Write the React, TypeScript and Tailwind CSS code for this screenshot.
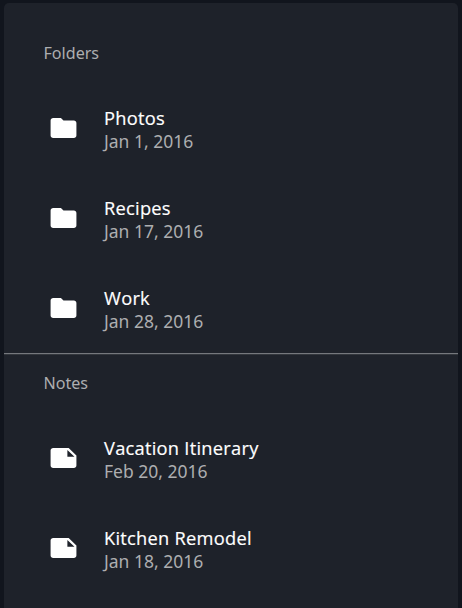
type Entry = { name: string; date: string };

const folders: Entry[] = [
  { name: "Photos", date: "Jan 1, 2016" },
  { name: "Recipes", date: "Jan 17, 2016" },
  { name: "Work", date: "Jan 28, 2016" },
];

const notes: Entry[] = [
  { name: "Vacation Itinerary", date: "Feb 20, 2016" },
  { name: "Kitchen Remodel", date: "Jan 18, 2016" },
];

const FOLDER = "M10 4H4c-1.1 0-1.99.9-1.99 2L2 18c0 1.1.9 2 2 2h16c1.1 0 2-.9 2-2V8c0-1.1-.9-2-2-2h-8l-2-2z";
const NOTE = "M22 10l-6-6H4c-1.1 0-2 .9-2 2v12.01c0 1.1.9 1.99 2 1.99l16-.01c1.1 0 2-.89 2-1.99v-8zm-7-4.5l5.5 5.5H15V5.5z";

function Row({ entry, icon }: { entry: Entry; icon: string }) {
  return (
    <li className="flex h-[90px] items-center pl-[44px]">
      <svg viewBox="0 0 24 24" className="h-[30px] w-[31px] shrink-0 fill-white" preserveAspectRatio="none">
        <path d={icon} />
      </svg>
      <div className="ml-[25px] pt-[2px] text-[17.5px] leading-[23px]">
        <h4 className="mb-px font-['Open_Sans','Noto_Sans',sans-serif] text-[18.3px] tracking-[0.25px] text-white [-webkit-text-stroke:0.18px_white]">{entry.name}</h4>
        <p className="text-[#adaeb0]">{entry.date}</p>
      </div>
    </li>
  );
}

function Section({ title, entries, icon }: { title: string; entries: Entry[]; icon: string }) {
  return (
    <section>
      <h3 className="flex h-[60px] items-center pl-[39.5px] text-[16.1px] text-[#adaeb0]">{title}</h3>
      <ul>
        {entries.map((entry) => (
          <Row key={entry.name} entry={entry} icon={icon} />
        ))}
      </ul>
    </section>
  );
}

export default function App() {
  return (
    <main className="h-[608px] overflow-hidden bg-[#11151d] px-1 pt-[3px] font-['Noto_Sans',sans-serif]">
      <div className="h-full rounded-t-[5px] bg-[#1e222a] pt-5">
        <Section title="Folders" entries={folders} icon={FOLDER} />
        <div className="-mb-0.5 h-0.5 border-t border-[#75787d] bg-[#33373d]" />
        <Section title="Notes" entries={notes} icon={NOTE} />
      </div>
    </main>
  );
}
